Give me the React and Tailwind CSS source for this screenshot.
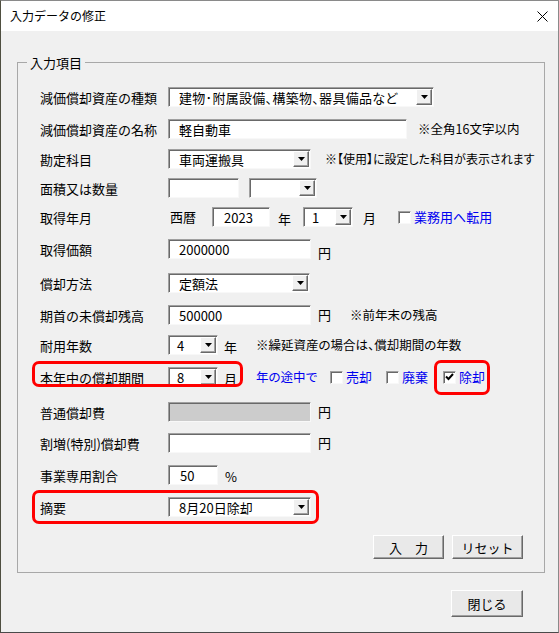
import clsx from 'clsx';

const font = "font-['Noto_Sans_CJK_JP','Noto_Sans',sans-serif]";

function Arrow() {
    return (
        <div className="flex h-full w-[16px] shrink-0 items-center justify-center border border-t-white border-l-white border-r-[#696969] border-b-[#696969] bg-[#f0f0f0] shadow-[inset_-1px_-1px_0_#a0a0a0]">
            <svg width="7" height="4" viewBox="0 0 7 4">
                <path d="M0 0h7L3.5 4z" fill="#000" />
            </svg>
        </div>
    );
}

function Box({ className, text, gray, combo, pad = 'pl-[10px]' }) {
    return (
        <div
            className={clsx(
                'flex h-[20px] shrink-0 items-stretch border border-t-[#a0a0a0] border-l-[#a0a0a0] border-r-[#f8f8f8] border-b-[#f8f8f8] shadow-[inset_1px_1px_0_#696969]',
                gray ? 'bg-[#cccccc]' : 'bg-white',
                className
            )}
        >
            <div className={clsx('flex flex-1 items-center overflow-hidden whitespace-nowrap text-[13px] leading-none', pad)}>{text}</div>
            {combo && (
                <div className="py-[1px] pr-[1px]">
                    <Arrow />
                </div>
            )}
        </div>
    );
}

function Check({ checked }) {
    return (
        <div className="flex h-[13px] w-[13px] shrink-0 items-center justify-center border border-t-[#a0a0a0] border-l-[#a0a0a0] border-r-[#f8f8f8] border-b-[#f8f8f8] bg-white shadow-[inset_1px_1px_0_#696969]">
            {checked && (
                <svg width="9" height="8" viewBox="0 0 9 8">
                    <path d="M1 3.5l2.5 2.5L8 1" stroke="#000" strokeWidth="2" fill="none" />
                </svg>
            )}
        </div>
    );
}

function Row({ label, gap, children }) {
    return (
        <div className={clsx('relative flex h-[20px] items-center', gap)}>
            <div className="w-[128px] shrink-0 whitespace-nowrap text-[13px] leading-none">{label}</div>
            {children}
        </div>
    );
}

function Button({ className, children }) {
    return (
        <div className={clsx('flex items-center justify-center border border-t-white border-l-white border-r-[#696969] border-b-[#696969] bg-[#e9e9e9] text-[13px] leading-none shadow-[inset_-1px_-1px_0_#a0a0a0]', className)}>
            {children}
        </div>
    );
}

export default function App() {
    return (
        <div className={clsx('h-[633px] w-[559px] overflow-hidden border border-[#8a8a8a] border-l-[#4f4f40] border-b-[#4a4a4a] bg-[#f0f0f0] text-black', font)}>
            {/* Title bar */}
            <div className="flex h-[30px] items-center justify-between bg-white pl-[9px] pr-[9px]">
                <span className="text-[12px]">入力データの修正</span>
                <svg width="11" height="11" viewBox="0 0 11 11" className="mr-[1px]">
                    <path d="M0.5 0.5l10 10M10.5 0.5l-10 10" stroke="#000" strokeWidth="1" />
                </svg>
            </div>

            {/* Group box */}
            <div className="relative ml-[16px] mt-[31px] w-[528px] border border-[#a8a8a8] pb-[13px] pl-[22px] pr-[21px] pt-[24px]">
                <span className="absolute left-[9px] top-[-10px] bg-[#f0f0f0] px-[3px] text-[13px]">入力項目</span>

                <Row label="減価償却資産の種類">
                    <Box combo className="w-[266px]" text={<span className="[font-feature-settings:'palt'] tracking-[0.3px]">建物･附属設備、構築物、器具備品など</span>} />
                </Row>
                <Row label="減価償却資産の名称" gap="mt-[12px]">
                    <Box className="w-[239px]" text="軽自動車" />
                    <span className="ml-[11px] text-[12.5px] [font-feature-settings:'palt']">※全角16文字以内</span>
                </Row>
                <Row label="勘定科目" gap="mt-[10px]">
                    <Box combo className="w-[143px]" text="車両運搬具" />
                    <span className="ml-[14px] whitespace-nowrap text-[12px] [font-feature-settings:'palt']">※【使用】に設定した科目が表示されます</span>
                </Row>
                <Row label="面積又は数量" gap="mt-[9px]">
                    <Box className="w-[71px]" text="" />
                    <Box combo className="ml-[10px] w-[68px]" text="" />
                </Row>
                <Row label="取得年月" gap="mt-[9px]">
                    <span className="ml-[2px] w-[42px] text-[13px]">西暦</span>
                    <Box className="w-[58px]" text="2023" pad="pl-[11px]" />
                    <span className="ml-[8px] mt-[4px] text-[13px]">年</span>
                    <Box combo className="ml-[12px] w-[50px]" text="1" pad="pl-[8px]" />
                    <span className="ml-[10px] mt-[2px] text-[13px]">月</span>
                    <div className="ml-[22px] flex items-center gap-[3px] text-[13px] text-[#0000f0]">
                        <Check />
                        <span className="[font-feature-settings:'palt']">業務用へ転用</span>
                    </div>
                </Row>
                <Row label="取得価額" gap="mt-[12px]">
                    <Box className="w-[143px]" text="2000000" />
                    <span className="ml-[7px] mt-[8px] text-[13px]">円</span>
                </Row>
                <Row label="償却方法" gap="mt-[14px]">
                    <Box combo className="w-[142px]" text="定額法" />
                </Row>
                <Row label="期首の未償却残高" gap="mt-[12px]">
                    <Box className="w-[143px]" text="500000" />
                    <span className="ml-[7px] text-[13px]">円</span>
                    <span className="ml-[19px] text-[12.5px]">※前年末の残高</span>
                </Row>
                <Row label="耐用年数" gap="mt-[10px]">
                    <Box combo className="w-[50px]" text="4" pad="pl-[8px]" />
                    <span className="ml-[6px] mt-[4px] text-[13px]">年</span>
                    <span className="ml-[19px] whitespace-nowrap text-[12.5px] [font-feature-settings:'palt']">※繰延資産の場合は、償却期間の年数</span>
                </Row>
                <Row label="本年中の償却期間" gap="mt-[12px]">
                    <Box combo className="w-[50px]" text="8" pad="pl-[8px]" />
                    <span className="ml-[6px] mt-[4px] text-[13px]">月</span>
                    <div className="ml-[19px] flex items-center text-[13px] text-[#0000f0]">
                        <span className="w-[59px] whitespace-nowrap text-[12.5px] [font-feature-settings:'palt']">年の途中で</span>
                        <div className="ml-[15px] flex items-center gap-[3px]">
                            <Check />
                            <span className="w-[27px]">売却</span>
                        </div>
                        <div className="ml-[13px] flex items-center gap-[3px]">
                            <Check />
                            <span className="w-[27px]">廃棄</span>
                        </div>
                        <div className="ml-[14px] flex items-center gap-[3px]">
                            <Check checked />
                            <span>除却</span>
                        </div>
                    </div>
                    <div className="absolute left-[-8px] top-[-6px] h-[26px] w-[211px] rounded-[7px] border-[3px] border-[#ff0000]" />
                    <div className="absolute left-[394px] top-[-7px] h-[35px] w-[56px] rounded-[7px] border-[3px] border-[#ff0000]" />
                </Row>
                <Row label="普通償却費" gap="mt-[15px]">
                    <Box gray className="w-[143px]" text="" />
                    <span className="ml-[7px] text-[13px]">円</span>
                </Row>
                <Row label="割増(特別)償却費" gap="mt-[11px]">
                    <Box className="w-[143px]" text="" />
                    <span className="ml-[7px] text-[13px]">円</span>
                </Row>
                <Row label="事業専用割合" gap="mt-[12px]">
                    <Box className="w-[50px]" text="50" pad="pl-[11px]" />
                    <span className="ml-[7px] mt-[3px] text-[13px]">%</span>
                </Row>
                <Row label="摘要" gap="mt-[12px]">
                    <Box combo className="w-[143px]" text="8月20日除却" />
                    <div className="absolute left-[-8px] top-[-7px] h-[34px] w-[287px] rounded-[7px] border-[3px] border-[#ff0000]" />
                </Row>

                <div className="mt-[18px] flex justify-end gap-[8px]">
                    <Button className="h-[24px] w-[71px]">入　力</Button>
                    <Button className="h-[24px] w-[71px] text-[12px]">リセット</Button>
                </div>
            </div>

            <div className="mt-[17px] flex justify-end pr-[35px]">
                <Button className="h-[27px] w-[72px]">閉じる</Button>
            </div>
        </div>
    );
}
